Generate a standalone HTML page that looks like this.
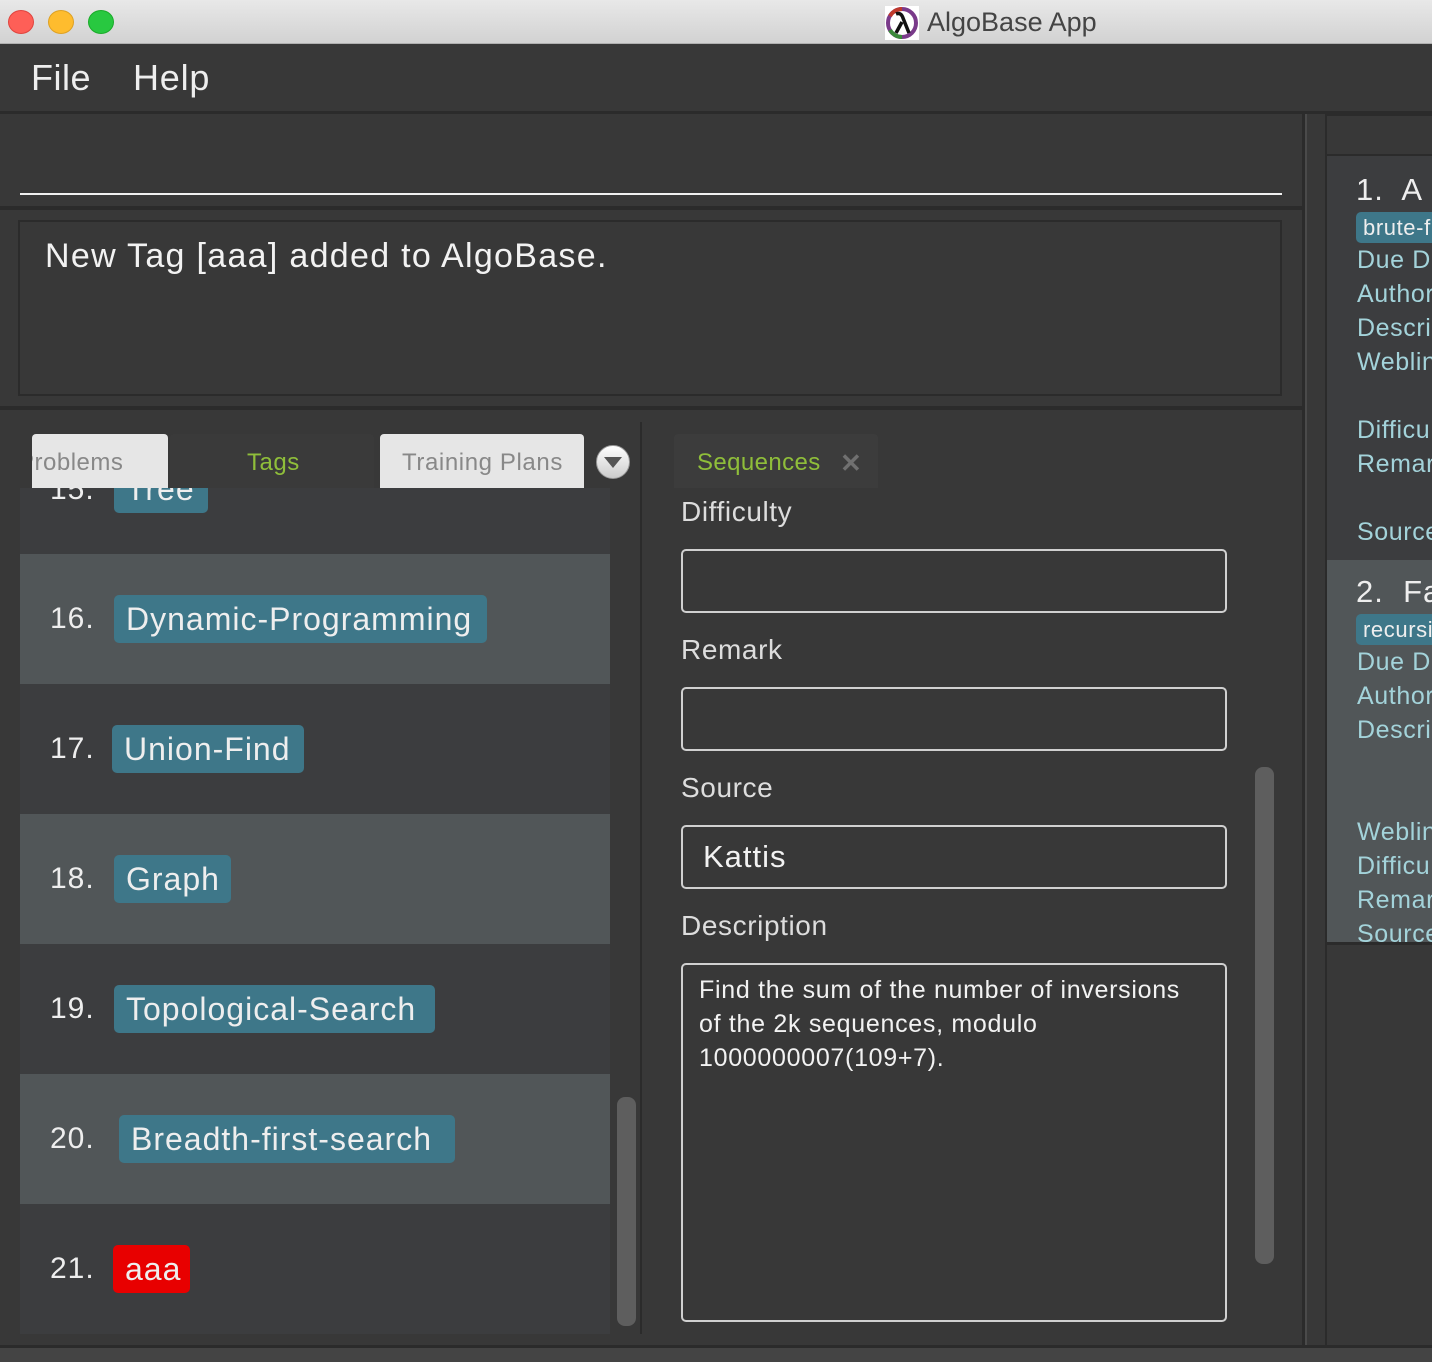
<!DOCTYPE html>
<html><head><meta charset="utf-8"><style>
*{margin:0;padding:0;box-sizing:border-box}
body{width:1432px;height:1362px;background:#383838;position:relative;overflow:hidden;font-family:"Liberation Sans",sans-serif;color:#e8e8e8}
.a{position:absolute}
.tag{position:absolute;background:#3e7789;border-radius:5px;height:48px;color:#eee;font-size:32px;line-height:48px;padding-left:12px;white-space:nowrap;letter-spacing:1px}
.num{position:absolute;font-size:30px;color:#eee;left:50px;letter-spacing:1px}
.lbl{position:absolute;left:681px;font-size:28px;color:#ddd;letter-spacing:0.6px}
.inp{position:absolute;left:681px;width:546px;border:2px solid #d0d0d0;border-radius:5px}
.rt{position:absolute;left:1357px;font-size:25px;color:#a3d3da;white-space:nowrap;letter-spacing:0.6px}
</style></head><body>
<div class="a" style="left:0;top:0;width:1432px;height:44px;background:linear-gradient(#e8e8e8,#d2d2d2);border-bottom:1px solid #b0b0b0"></div>
<div class="a" style="left:8px;top:10px;width:26px;height:24px;border-radius:50%;background:#fe5f57;border:1px solid #e0443e"></div>
<div class="a" style="left:48px;top:10px;width:26px;height:24px;border-radius:50%;background:#febc2e;border:1px solid #dea123"></div>
<div class="a" style="left:88px;top:10px;width:26px;height:24px;border-radius:50%;background:#28c840;border:1px solid #1aab29"></div>
<svg class="a" style="left:885px;top:6px" width="34" height="34" viewBox="0 0 34 34"><rect width="34" height="34" fill="#fff"/><circle cx="17" cy="17" r="14" fill="none" stroke="#7a3a8a" stroke-width="4"/><path d="M5 10 A14 14 0 0 1 17 3" stroke="#c0392b" stroke-width="4" fill="none"/><path d="M5 24 A14 14 0 0 0 17 31" stroke="#3a8a3a" stroke-width="4" fill="none"/><path d="M11 8 Q16 6 18 12 L24 27 M17 16 L11 27" stroke="#111" stroke-width="3.5" fill="none"/></svg>
<div class="a" style="left:927px;top:7px;font-size:27px;color:#444">AlgoBase App</div>
<div class="a" style="left:31px;top:57px;font-size:36px;color:#eee;letter-spacing:0.5px">File</div>
<div class="a" style="left:133px;top:57px;font-size:36px;color:#eee;letter-spacing:0.8px">Help</div>
<div class="a" style="left:0;top:111px;width:1432px;height:3px;background:#2b2b2b"></div>
<div class="a" style="left:20px;top:193px;width:1262px;height:2px;background:#f0f0f0"></div>
<div class="a" style="left:0;top:206px;width:1303px;height:4px;background:#2b2b2b"></div>
<div class="a" style="left:18px;top:220px;width:1264px;height:176px;border:2px solid #2b2b2b"></div>
<div class="a" style="left:45px;top:237px;font-size:34px;color:#f2f2f2;letter-spacing:1.3px">New Tag [aaa] added to AlgoBase.</div>
<div class="a" style="left:0;top:406px;width:1303px;height:4px;background:#2b2b2b"></div>
<div class="a" style="left:1302px;top:114px;width:3px;height:1234px;background:#2b2b2b"></div>
<div class="a" style="left:1305px;top:114px;width:2px;height:1234px;background:#4a4a4a"></div>
<div class="a" style="left:32px;top:434px;width:136px;height:54px;background:#e6e6e6;border-radius:4px 4px 0 0;overflow:hidden"><div style="position:absolute;left:-14px;top:15px;font-size:24px;color:#888;letter-spacing:0.5px">Problems</div></div>
<div class="a" style="left:170px;top:434px;width:204px;height:54px;background:#3a3a3a;border-radius:4px 4px 0 0"></div>
<div class="a" style="left:247px;top:449px;font-size:24px;color:#8fbe3a;letter-spacing:0.5px">Tags</div>
<div class="a" style="left:380px;top:434px;width:204px;height:54px;background:#e6e6e6;border-radius:4px 4px 0 0"></div>
<div class="a" style="left:402px;top:449px;font-size:24px;color:#888;letter-spacing:0.6px">Training Plans</div>
<div class="a" style="left:596px;top:445px;width:34px;height:34px;border-radius:50%;background:linear-gradient(#fff,#ccc);border:1px solid #999"></div>
<div class="a" style="left:604px;top:457px;width:0;height:0;border-left:9px solid transparent;border-right:9px solid transparent;border-top:11px solid #555"></div>
<div class="a" style="left:20px;top:488px;width:590px;height:846px;background:#3c3d3f;overflow:hidden">
 <div class="a" style="left:0;top:66px;width:590px;height:130px;background:#515658"></div>
 <div class="a" style="left:0;top:326px;width:590px;height:130px;background:#515658"></div>
 <div class="a" style="left:0;top:586px;width:590px;height:130px;background:#515658"></div>
 <div class="num" style="left:30px;top:-15px">15.</div>
 <div class="tag" style="left:94px;top:-23px;width:94px;height:48px;line-height:48px">Tree</div>
</div>
<div class="num" style="top:602px">16.</div><div class="tag" style="left:114px;top:595px;width:373px">Dynamic-Programming</div>
<div class="num" style="top:732px">17.</div><div class="tag" style="left:112px;top:725px;width:192px">Union-Find</div>
<div class="num" style="top:862px">18.</div><div class="tag" style="left:114px;top:855px;width:117px">Graph</div>
<div class="num" style="top:992px">19.</div><div class="tag" style="left:114px;top:985px;width:321px">Topological-Search</div>
<div class="num" style="top:1122px">20.</div><div class="tag" style="left:119px;top:1115px;width:336px">Breadth-first-search</div>
<div class="num" style="top:1252px">21.</div><div class="tag" style="left:113px;top:1245px;width:77px;background:#e80000;padding-left:12px">aaa</div>
<div class="a" style="left:617px;top:1097px;width:19px;height:229px;background:#5e5e5e;border-radius:8px"></div>
<div class="a" style="left:640px;top:422px;width:2px;height:912px;background:#2b2b2b"></div>
<div class="a" style="left:674px;top:434px;width:204px;height:54px;background:#3c3c3c;border-radius:4px 4px 0 0"></div>
<div class="a" style="left:697px;top:449px;font-size:24px;color:#8fbe3a;letter-spacing:0.4px">Sequences</div>
<div class="a" style="left:840px;top:448px;font-size:26px;color:#707070;font-weight:bold">✕</div>
<div class="lbl" style="top:496px">Difficulty</div>
<div class="inp" style="top:549px;height:64px"></div>
<div class="lbl" style="top:634px">Remark</div>
<div class="inp" style="top:687px;height:64px"></div>
<div class="lbl" style="top:772px">Source</div>
<div class="inp" style="top:825px;height:64px"></div>
<div class="a" style="left:703px;top:839px;font-size:31px;color:#f2f2f2;letter-spacing:1px">Kattis</div>
<div class="lbl" style="top:910px">Description</div>
<div class="inp" style="top:963px;height:359px;padding:8px 16px;font-size:25px;line-height:34px;color:#f2f2f2;letter-spacing:0.7px">Find the sum of the number of inversions of the 2k sequences, modulo 1000000007(109+7).</div>
<div class="a" style="left:1255px;top:767px;width:19px;height:497px;background:#5e5e5e;border-radius:8px"></div>
<div class="a" style="left:1325px;top:114px;width:107px;height:42px;border:2px solid #2b2b2b;border-right:none;background:#383838"></div>
<div class="a" style="left:1325px;top:156px;width:107px;height:404px;background:#3c3d3f"></div>
<div class="a" style="left:1325px;top:560px;width:107px;height:382px;background:#515658"></div>
<div class="a" style="left:1325px;top:156px;width:2px;height:1192px;background:#2b2b2b"></div>
<div class="a" style="left:1325px;top:942px;width:107px;height:3px;background:#2b2b2b"></div>
<div class="a" style="left:1325px;top:1345px;width:107px;height:3px;background:#2b2b2b"></div>
<div class="a" style="left:1356px;top:172px;font-size:31px;color:#eee;white-space:nowrap;letter-spacing:1px">1.&nbsp; A</div>
<div class="tag" style="left:1356px;top:212px;width:90px;height:31px;line-height:31px;font-size:22px;padding-left:7px;letter-spacing:0.6px">brute-f</div>
<div class="rt" style="top:246px">Due D</div>
<div class="rt" style="top:280px">Author</div>
<div class="rt" style="top:314px">Descri</div>
<div class="rt" style="top:348px">Weblin</div>
<div class="rt" style="top:416px">Difficu</div>
<div class="rt" style="top:450px">Remar</div>
<div class="rt" style="top:518px">Source</div>
<div class="a" style="left:1356px;top:574px;font-size:31px;color:#eee;white-space:nowrap;letter-spacing:1px">2.&nbsp; Fa</div>
<div class="tag" style="left:1356px;top:614px;width:90px;height:31px;line-height:31px;font-size:22px;padding-left:7px;letter-spacing:0.6px">recursi</div>
<div class="rt" style="top:648px">Due D</div>
<div class="rt" style="top:682px">Author</div>
<div class="rt" style="top:716px">Descri</div>
<div class="rt" style="top:818px">Weblin</div>
<div class="rt" style="top:852px">Difficu</div>
<div class="rt" style="top:886px">Remar</div>
<div class="a" style="left:1325px;top:920px;width:107px;height:22px;overflow:hidden"><div class="rt" style="left:32px;top:0">Source</div></div>
<div class="a" style="left:0;top:1345px;width:1432px;height:3px;background:#2b2b2b"></div>
<div class="a" style="left:0;top:1348px;width:1432px;height:14px;background:#444"></div>
</body></html>
